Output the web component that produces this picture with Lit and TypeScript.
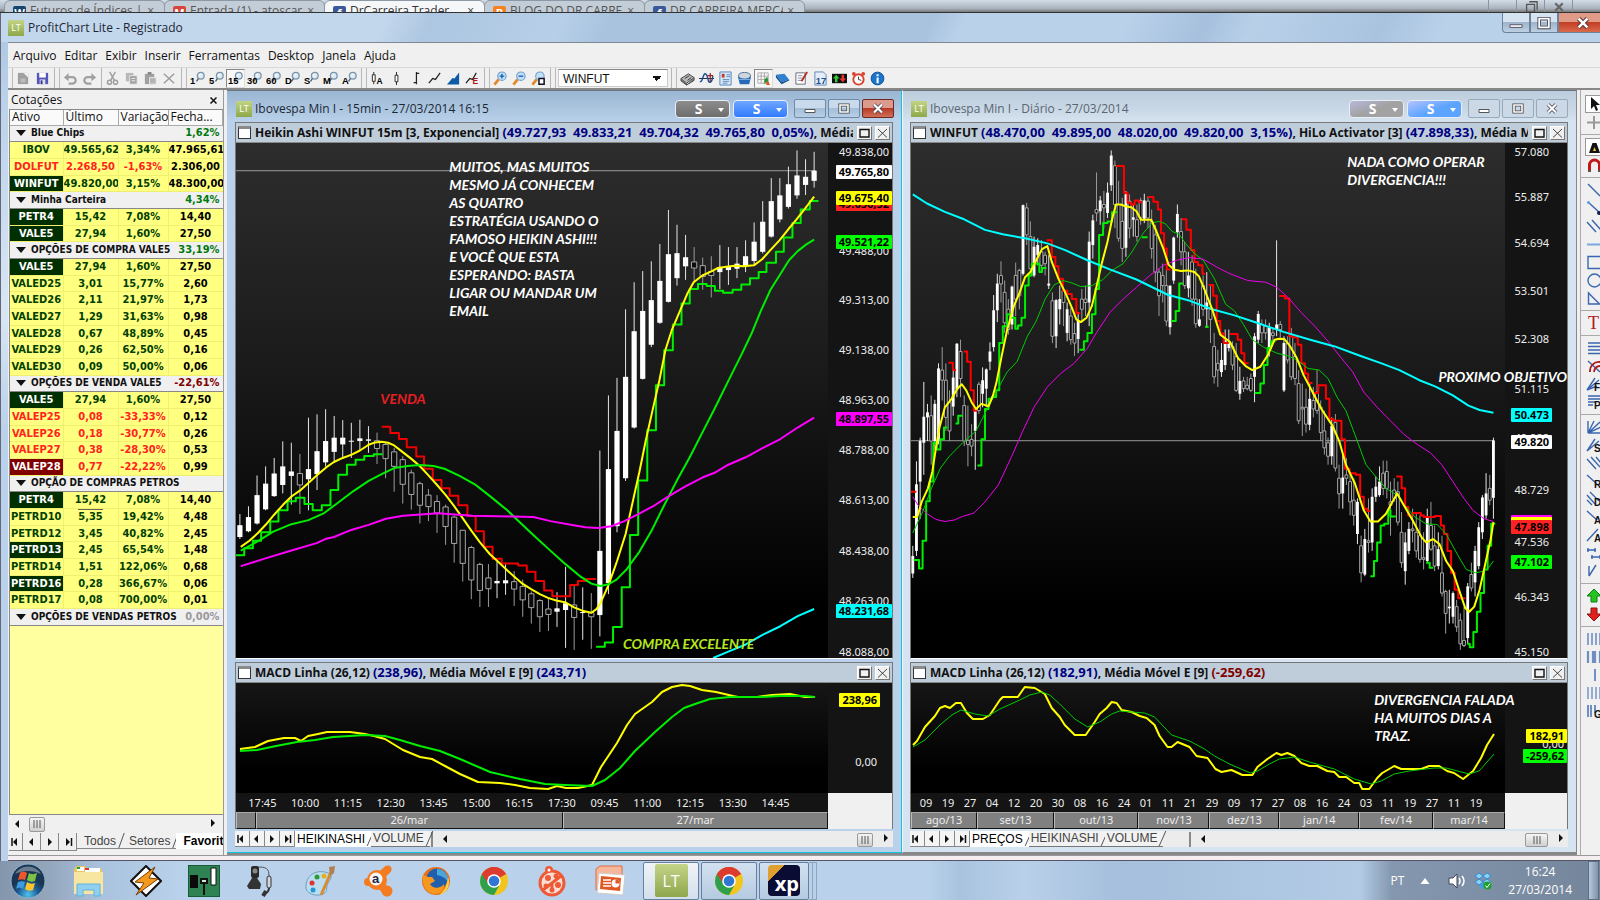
import { LitElement, html, svg, css, nothing } from "lit";
import { customElement, property } from "lit/decorators.js";
import { classMap } from "lit/directives/class-map.js";

type Pt = [number, number];
type Candle = [number, number, number, number, number];

/* ---------- quotes ---------- */
interface Quote { s: string; u: string; v: string; f: string; down?: boolean; mark?: boolean; over?: boolean; rule?: boolean }
interface Group { name: string; pct: string; tone: string; rows: Quote[] }
const q = (line: string): Quote => {
  const [s, u, v, f, flags = ""] = line.split(" ");
  return { s, u, v, f, down: flags.includes("d"), mark: flags.includes("m"), over: flags.includes("o"), rule: flags.includes("r") };
};
const GROUPS: Group[] = [
  { name: "Blue Chips", pct: "1,62%", tone: "up", rows: ["IBOV 49.565,62 3,34% 47.965,61", "DOLFUT 2.268,50 -1,63% 2.306,00 d", "WINFUT 49.820,00 3,15% 48.300,00 m"].map(q) },
  { name: "Minha Carteira", pct: "4,34%", tone: "up", rows: ["PETR4 15,42 7,08% 14,40 m", "VALE5 27,94 1,60% 27,50 m"].map(q) },
  { name: "OPÇÕES DE COMPRA VALE5", pct: "33,19%", tone: "up", rows: ["VALE5 27,94 1,60% 27,50 m", "VALED25 3,01 15,77% 2,60", "VALED26 2,11 21,97% 1,73", "VALED27 1,29 31,63% 0,98", "VALED28 0,67 48,89% 0,45", "VALED29 0,26 62,50% 0,16", "VALED30 0,09 50,00% 0,06"].map(q) },
  { name: "OPÇÕES DE VENDA VALE5", pct: "-22,61%", tone: "down", rows: ["VALE5 27,94 1,60% 27,50 m", "VALEP25 0,08 -33,33% 0,12 d", "VALEP26 0,18 -30,77% 0,26 d", "VALEP27 0,38 -28,30% 0,53 d", "VALEP28 0,77 -22,22% 0,99 dm"].map(q) },
  { name: "OPÇÃO DE COMPRAS PETROS", pct: "", tone: "up", rows: ["PETR4 15,42 7,08% 14,40 m", "PETRD10 5,35 19,42% 4,48 o", "PETRD12 3,45 40,82% 2,45", "PETRD13 2,45 65,54% 1,48 m", "PETRD14 1,51 122,06% 0,68", "PETRD16 0,28 366,67% 0,06 m", "PETRD17 0,08 700,00% 0,01 r"].map(q) },
  { name: "OPÇÕES DE VENDAS PETROS", pct: "0,00%", tone: "flat", rows: [] },
];

/* ---------- series ---------- */
const pts = (s: string): Pt[] => s.trim().split(/\s+/).map((p) => p.split(",").map(Number) as Pt);
const candles = (s: string): Candle[] => s.trim().split(/\s+/).map((p) => p.split(",").map(Number) as Candle);
const poly = (s: string) => pts(s).map((p) => p.join(",")).join(" ");
/** "x0 x1,y1 x2,y2": horizontal runs joined by vertical jumps */
const stair = (s: string) => {
  const [start, ...rest] = s.trim().split(/\s+/);
  let x = Number(start);
  const out: string[] = [];
  for (const r of rest) {
    const [nx, y] = r.split(",").map(Number);
    out.push(`${x},${y}`, `${nx},${y}`);
    x = nx;
  }
  return out.join(" ");
};

interface Line { kind?: "stair"; color: string; w: number; d: string }
interface Tag { y: number; text: string; bg: string }
interface Plot { box: [number, number, number, number]; first?: number; step?: number; body?: number; candles?: Candle[]; lines: Line[]; level?: [number, number]; labels: [number, string][]; tags: Tag[] }

const P15: Plot = {
  box: [14, 8, 1366, 1524], first: 23, step: 19.776, body: 12,
  candles: candles(`1106,1139,1174,1180,1 1083,1115,1157,1160,1 992,1050,1134,1137,1 965,1016,1092,1095,1 940,986,1053,1055,1 891,965,1020,1045,1 895,980,993,1078,1 928,986,1020,1106,0 821,973,1003,1095,1 811,920,988,1035,1 796,890,953,965,1 816,880,922,950,1 828,880,900,940,1 836,889,892,940,1 827,882,890,918,1 846,885,889,925,1 865,889,912,958,0 895,900,942,1000,0 910,922,965,1040,0 935,945,1018,1075,0 975,984,1048,1093,0 1010,1016,1080,1134,0 1032,1050,1084,1127,0 1050,1069,1103,1162,0 1078,1085,1143,1197,0 1110,1115,1193,1250,0 1154,1154,1252,1306,0 1200,1205,1301,1358,0 1250,1255,1332,1381,0 1254,1295,1327,1381,0 1246,1304,1311,1355,1 1250,1302,1311,1345,1 1275,1306,1328,1378,0 1300,1320,1360,1410,0 1335,1342,1383,1430,0 1358,1362,1410,1455,0 1355,1387,1403,1452,0 1337,1385,1395,1440,1 1262,1370,1390,1502,1 1318,1375,1412,1508,0 1323,1396,1399,1478,1 1340,1398,1410,1505,0 918,1215,1405,1468,1 755,973,1310,1343,1 703,860,1142,1160,1 500,700,1000,1008,1 420,565,850,853,1 387,505,706,708,1 358,473,605,612,1 307,416,540,543,1 206,337,478,480,1 250,334,408,430,1 280,346,373,413,1 316,360,378,418,0 347,371,403,442,0 343,388,400,465,0 310,375,390,440,1 316,373,384,428,1 316,365,380,408,1 296,343,372,390,1 243,300,357,370,1 180,241,330,335,1 112,180,285,288,1 112,163,234,243,1 78,130,197,202,1 30,104,163,173,1 56,108,132,162,1 34,90,120,140,1`),
  level: [90, 1352],
  lines: [
    { kind: "stair", color: "#0e0", w: 2, d: "14 33,1228 53,1207 72,1185 93,1160 112,1128 133,1095 152,1068 172,1058 191,1076 212,1095 232,1080 250,1035 270,990 290,960 310,945 332,934 352,929" },
    { kind: "stair", color: "#e00", w: 2, d: "350 370,848 390,866 408,884 430,908 448,936 468,972 488,1005 507,1030 527,1052 548,1080 567,1112 586,1157 606,1203 627,1238 665,1252 685,1258 705,1277 725,1304 744,1332 785,1349 803,1316 822,1304 845,1298" },
    { kind: "stair", color: "#0e0", w: 2, d: "845 865,1499 884,1486 904,1440 923,1323 942,1168 963,1007 983,858 1002,725 1022,621 1042,545 1061,483 1080,440 1100,425 1119,431 1138,445 1160,451 1180,442 1200,427 1220,408 1238,390 1260,362 1278,330 1298,288 1317,245 1338,205 1358,180" },
    { color: "#ff0", w: 2, d: "25,1203 45,1185 64,1163 83,1137 102,1108 123,1078 142,1054 162,1036 181,1014 202,990 222,968 240,952 260,940 281,930 300,918 320,901 335,894 350,892 365,895 379,903 398,922 418,942 438,964 457,990 478,1020 498,1050 517,1082 537,1118 557,1155 577,1190 600,1225 617,1245 636,1268 655,1290 675,1312 695,1328 715,1343 734,1354 753,1362 775,1368 794,1382 813,1392 834,1398 845,1388 853,1375 873,1318 892,1250 913,1165 932,1055 945,980 960,885 975,800 991,710 1005,620 1020,560 1035,515 1055,455 1070,420 1090,400 1111,388 1125,378 1145,374 1165,371 1185,373 1209,370 1228,352 1247,325 1268,296 1288,264 1307,235 1327,202 1348,167" },
    { color: "#0e0", w: 2, d: "25,1214 60,1190 100,1158 142,1136 181,1124 215,1105 250,1072 285,1038 320,1008 350,988 379,970 410,964 438,961 470,964 495,972 530,993 565,1018 600,1053 640,1095 670,1132 700,1168 740,1215 775,1255 810,1292 834,1312 855,1319 873,1314 892,1300 915,1270 945,1217 975,1150 1000,1085 1030,1010 1060,940 1090,865 1120,790 1150,712 1180,635 1205,568 1225,505 1247,443 1268,400 1290,355 1310,328 1330,308 1348,294" },
    { color: "#f0f", w: 2, d: "25,1260 80,1238 142,1214 200,1192 220,1180 240,1174 280,1153 320,1138 360,1120 400,1111 440,1107 480,1104 520,1107 560,1111 650,1113 700,1115 740,1127 780,1136 820,1145 850,1147 880,1142 910,1127 940,1108 980,1080 1010,1055 1050,1025 1090,998 1120,983 1150,960 1190,938 1230,910 1270,884 1310,850 1348,821" },
    { color: "#0ff", w: 2, d: "1115,1532 1150,1513 1190,1492 1230,1463 1270,1438 1310,1408 1348,1387" },
  ],
  labels: [[36, "49.838,00"], [328, "49.488,00"], [474, "49.313,00"], [620, "49.138,00"], [768, "48.963,00"], [916, "48.788,00"], [1065, "48.613,00"], [1214, "48.438,00"], [1364, "48.263,00"], [1515, "48.088,00"]],
  tags: [{ y: 95, text: "49.765,80", bg: "#fff" }, { y: 188, text: "49.656,52", bg: "#f22" }, { y: 172, text: "49.675,40", bg: "#ff0" }, { y: 300, text: "49.521,22", bg: "#0f0" }, { y: 825, text: "48.897,55", bg: "#f0f" }, { y: 1392, text: "48.231,68", bg: "#0ff" }],
};

const PDAY: Plot = {
  box: [24, 8, 1333, 1524], first: 28, step: 8.247, body: 6.4,
  candles: candles(`1200,1230,1282,1295,1 950,1018,1215,1230,1 880,890,1010,1120,1 715,818,895,990,1 780,805,820,890,1 755,815,890,960,0 768,780,890,915,1 660,675,890,900,1 612,680,710,770,0 660,710,820,860,0 740,775,860,890,0 680,702,788,815,1 600,602,738,760,1 590,625,705,760,0 755,785,890,905,0 785,888,900,965,0 840,885,905,935,0 790,800,860,975,1 715,722,800,810,0 672,710,750,790,1 675,678,735,790,1 598,625,655,680,1 458,503,612,625,1 395,424,503,538,1 358,400,425,480,0 415,450,540,570,0 470,500,560,575,0 430,433,545,560,1 362,400,470,520,0 380,385,460,500,0 190,192,395,400,1 185,200,280,310,0 240,285,380,395,0 285,315,400,405,1 290,310,340,370,1 295,330,370,390,0 330,340,365,400,0 340,424,430,440,1 450,475,580,600,0 470,473,580,615,1 430,470,500,545,1 440,445,480,550,0 480,500,570,595,1 495,520,590,605,0 540,572,600,638,0 508,532,588,630,1 440,470,500,535,0 430,470,480,520,0 270,300,480,550,1 220,237,310,350,1 95,205,215,240,0 165,178,210,250,1 150,190,200,260,0 125,155,215,230,1 30,45,133,150,1 60,75,190,260,0 120,190,290,300,0 170,240,320,360,0 150,160,318,345,1 160,180,260,290,0 190,228,235,285,1 190,235,285,300,0 170,178,230,250,0 158,178,232,245,1 165,180,230,260,0 205,240,320,350,0 250,280,390,420,0 380,390,460,520,0 365,400,430,480,0 380,430,535,550,0 430,430,553,575,1 285,288,415,425,1 190,218,272,288,1 230,270,330,370,0 300,330,430,440,0 330,400,438,465,1 340,360,470,490,0 380,470,543,555,0 470,530,549,552,1 400,430,500,520,0 390,480,500,555,1 430,500,530,600,0 570,610,700,720,0 620,660,680,730,0 600,650,686,700,1 560,592,665,680,1 560,600,615,625,1 595,610,665,680,0 600,640,740,745,0 670,712,750,768,1 700,712,735,745,0 700,725,735,740,0 690,705,740,745,0 570,580,700,775,1 505,514,590,600,1 530,545,570,600,0 530,550,570,590,0 540,555,620,640,1 555,570,578,600,0 296,545,560,580,1 535,545,560,590,0 580,600,740,745,1 580,600,650,660,0 555,575,700,710,0 600,640,705,725,0 680,720,830,840,0 720,790,795,875,0 735,790,840,865,0 720,765,842,858,1 730,770,795,820,0 680,745,800,810,0 770,790,865,890,0 800,860,910,930,0 880,895,935,960,0 820,845,935,960,1 810,835,970,980,0 960,1000,1046,1090,0 930,998,1045,1090,1 940,990,1000,1020,0 985,1010,1070,1110,0 1000,1065,1110,1140,0 1060,1070,1165,1195,1 1170,1200,1280,1308,0 1150,1180,1285,1290,1 1060,1185,1190,1220,0 1030,1055,1190,1215,1 995,1025,1055,1070,1 965,1010,1050,1055,1 948,985,1030,1050,0 948,980,1030,1060,0 1010,1070,1080,1170,0 1000,1035,1060,1070,0 1010,1040,1130,1140,0 1100,1160,1250,1265,0 1160,1190,1275,1315,1 1130,1150,1215,1225,1 1090,1150,1155,1190,0 1100,1160,1215,1235,0 1110,1170,1240,1250,0 1160,1235,1240,1270,0 1090,1115,1245,1250,1 1070,1140,1210,1215,0 1140,1200,1260,1275,0 1160,1210,1260,1270,1 1170,1280,1340,1350,0 1330,1335,1400,1460,0 1330,1380,1385,1430,1 1335,1340,1410,1430,1 1360,1380,1440,1455,0 1400,1420,1490,1508,0 1380,1480,1495,1500,0 1310,1320,1473,1490,1 1250,1285,1325,1335,0 1200,1215,1308,1350,1 1130,1145,1260,1270,1 1050,1057,1160,1180,1 985,1045,1110,1120,1 990,1030,1065,1080,0 880,888,1058,1120,1`),
  level: [889, 1331],
  lines: [
    ...["24 36,1040", "108 118,658 125,680", "142 150,625 158,655 165,740 172,800", "328 340,296 348,345 355,373 365,410 375,445 385,455 395,470 404,512", "484 502,76 510,155 518,185 526,190 535,178 543,183", "555 568,168 578,182 585,205 592,275 598,320 607,382", "632 642,234 652,265 660,325 668,360 678,370 684,395", "692 702,428 710,460 718,535 726,572 737,600", "740 757,573 765,590 772,630 782,660", "850 863,461 873,468 880,580 892,583 900,605 908,660 915,690 925,718", "928 938,748 955,725 963,765 972,825 990,830 998,885 1008,972 1022,985 1032,990 1040,1055 1048,1090 1055,1097", "1113 1125,995 1133,1030 1140,1085 1150,1110 1168,1103 1175,1110 1200,1115 1213,1112 1220,1140 1228,1165 1236,1215 1244,1280 1252,1330 1268,1355"].map((d): Line => ({ kind: "stair", color: "#f00", w: 2, d })),
    ...["30 42,1242 50,1267 58,1185 66,1068 74,1010 82,895 90,915 98,885 106,850", "124 130,838 140,815", "173 182,962 190,885 198,795 206,765 215,760 222,740 230,600 240,550 248,515 258,525 264,558 272,548 280,525 288,430 295,400 305,365 312,365 318,390 328,378", "402 412,620 420,595 430,570 438,515 446,440 455,280 465,245 475,240 487,213", "542 555,287", "608 618,535 626,505 635,424", "684 692,552", "795 808,748 816,720 824,665 832,615 842,595", "1055 1063,1290 1070,1245 1078,1190 1086,1140 1095,1135 1100,1095 1112,1113", "1180 1188,1250 1196,1265", "1272 1278,1490 1286,1500 1294,1455 1302,1395 1310,1340 1318,1270 1326,1200 1335,1135"].map((d): Line => ({ kind: "stair", color: "#0e0", w: 2, d })),
    { color: "#0c0", w: 1, d: "28,1162 50,1100 70,1030 90,970 110,935 140,895 170,860 195,795 215,745 240,685 262,655 285,580 305,535 325,470 345,428 365,415 385,422 405,433 430,430 455,412 475,385 500,365 520,330 545,275 565,245 580,240 595,247 610,270 625,277 640,305 660,335 680,355 705,410 730,485 750,505 770,545 790,590 815,612 845,630 870,638 890,650 915,675 940,680 960,705 980,760 1000,800 1020,870 1045,960 1070,1000 1090,1030 1115,1050 1130,1078 1155,1115 1180,1135 1205,1137 1225,1165 1250,1225 1270,1270 1290,1280 1310,1275 1320,1265 1331,1245" },
    { color: "#e0e", w: 1, d: "28,1055 40,1080 60,1105 80,1122 100,1128 120,1124 140,1113 165,1103 190,1070 220,1020 250,935 275,860 300,790 330,730 360,690 390,660 420,615 440,570 470,510 500,470 530,435 560,400 590,370 620,355 650,347 680,352 710,375 740,395 780,415 820,420 845,435 870,465 900,510 930,550 960,595 990,645 1015,685 1040,745 1070,790 1100,830 1130,870 1160,900 1190,925 1215,960 1240,1010 1265,1060 1285,1095 1310,1120 1331,1128" },
    { color: "#0ff", w: 2, d: "28,160 60,187 100,212 140,232 190,265 230,278 280,290 330,305 370,325 420,355 470,382 530,412 600,457 650,475 700,500 750,518 800,540 860,567 920,590 975,610 1030,637 1080,660 1120,680 1165,710 1200,728 1240,755 1275,785 1300,798 1331,806" },
    { color: "#ff0", w: 2, d: "28,1115 38,1115 48,1070 62,1030 72,980 80,910 88,850 100,790 115,765 128,735 138,722 148,740 160,775 170,795 182,780 198,787 208,755 216,715 228,635 240,560 255,490 268,450 280,405 292,390 305,355 318,322 330,313 340,360 355,410 370,450 385,495 395,530 405,538 418,525 430,490 440,435 452,365 465,300 475,235 484,190 495,190 505,195 518,198 530,210 540,235 563,235 575,270 590,320 602,368 615,383 630,387 645,385 660,390 670,402 682,440 700,500 718,575 740,597 758,645 775,668 790,680 808,670 825,635 840,590 850,587 862,588 875,610 890,645 905,695 925,745 945,795 970,845 985,890 1000,960 1020,1015 1040,1095 1055,1128 1072,1128 1090,1105 1100,1080 1115,1045 1130,1080 1150,1125 1170,1175 1180,1190 1195,1180 1210,1195 1225,1245 1240,1275 1255,1335 1268,1385 1277,1395 1288,1380 1300,1330 1315,1240 1325,1180 1331,1130" },
  ],
  labels: [[36, "57.080"], [168, "55.887"], [305, "54.694"], [445, "53.501"], [587, "52.308"], [735, "51.115"], [880, "49.922"], [1035, "48.729"], [1189, "47.536"], [1350, "46.343"], [1515, "45.150"]],
  tags: [{ y: 812, text: "50.473", bg: "#0ff" }, { y: 893, text: "49.820", bg: "#fff" }, { y: 1130, text: "47.990", bg: "#f0f" }, { y: 1136, text: "47.970", bg: "#ff0" }, { y: 1143, text: "47.898", bg: "#f22" }, { y: 1249, text: "47.102", bg: "#0f0" }],
};

const M15: Plot = {
  box: [236, 682, 592, 110],
  lines: [
    { color: "#ff0", w: 2, d: "240,748 255,746 268,740 284,737 295,737 301,740 308,735 318,733 327,731 350,731 365,733 374,735 385,738 403,749 420,756 432,758 445,765 460,773 478,781 500,782 515,784 530,787 548,788 557,785 566,787 578,787 592,784 601,766 617,742 627,724 635,713 652,701 662,691 672,686 682,684 690,685 702,689 716,691 733,695 738,696 757,696 772,694 790,693 805,696 815,696" },
    { color: "#0e0", w: 2, d: "240,750 257,749 276,745 297,741 315,739 333,736 350,735 365,734 385,735 400,739 420,745 440,750 460,758 490,771 520,778 545,783 565,784 592,785 605,779 620,767 635,750 655,731 672,716 684,707 695,703 710,698 730,696 760,696 780,695 805,695 815,696" },
  ],
  labels: [[761, "0,00"]],
  tags: [{ y: 699, text: "238,96", bg: "#ff0" }],
};
const MDAY: Plot = {
  box: [911, 682, 595, 110],
  lines: [
    { color: "#ff0", w: 2, d: "913,744 917,740 925,726 935,715 940,707 945,705 950,707 956,702 961,702 967,712 973,718 983,718 990,714 1000,699 1003,696 1018,696 1025,686 1035,687 1045,693 1052,707 1060,716 1065,724 1075,734 1086,734 1095,721 1100,713 1107,707 1112,701 1117,702 1122,709 1132,711 1140,715 1147,717 1155,724 1160,735 1168,746 1172,746 1178,741 1190,746 1197,755 1208,757 1216,768 1222,771 1232,769 1243,774 1253,774 1258,766 1268,758 1277,752 1282,754 1288,752 1295,755 1302,762 1310,765 1318,765 1328,770 1335,771 1340,776 1347,776 1355,782 1360,782 1363,788 1370,788 1378,777 1383,772 1390,768 1395,765 1402,768 1422,768 1430,765 1440,765 1448,770 1455,772 1464,778 1474,770 1482,757 1488,744 1495,733" },
    { color: "#0c0", w: 1, d: "913,746 925,739 940,724 952,714 961,709 975,713 988,715 1000,708 1020,699 1030,694 1042,691 1050,694 1060,703 1075,718 1088,726 1100,721 1112,713 1120,710 1145,712 1155,716 1172,734 1190,740 1205,748 1215,755 1230,763 1251,772 1258,770 1270,763 1280,758 1295,756 1310,761 1335,768 1355,778 1372,783 1382,780 1395,773 1410,770 1435,767 1447,767 1470,773 1480,770 1488,761 1495,753" },
  ],
  labels: [[743, "0,00"]],
  tags: [{ y: 735, text: "182,91", bg: "#ff0" }, { y: 755, text: "-259,62", bg: "#0f0" }],
};

interface Note { x: number; y: number; text: string; color: string }
interface Chart {
  id: string; title: string; active: boolean; price: Plot; macd: Plot;
  head: [string, string][]; macdHead: [string, string][];
  notes: Note[]; macdNotes: Note[]; times: string[]; months: [number, string][]; tabs: string[];
}
const CHARTS: Chart[] = [
  {
    id: "m15", title: "Ibovespa Min I - 15min - 27/03/2014 16:15", active: true, price: P15, macd: M15,
    head: [["", "Heikin Ashi WINFUT 15m [3, Exponencial] "], ["navy", "(49.727,93  49.833,21  49.704,32  49.765,80  0,05%)"], ["", ", Média Móvel"]],
    macdHead: [["", "MACD Linha (26,12) "], ["navy", "(238,96)"], ["", ", Média Móvel E [9] "], ["navy", "(243,71)"]],
    notes: [
      { x: 32.5, y: 3, text: "MUITOS, MAS MUITOS\nMESMO JÁ CONHECEM\nAS QUATRO\nESTRATÉGIA USANDO O\nFAMOSO HEIKIN ASHI!!!\nE VOCÊ QUE ESTA\nESPERANDO: BASTA\nLIGAR OU MANDAR UM\nEMAIL", color: "#fff" },
      { x: 22, y: 48, text: "VENDA", color: "#e62020" },
      { x: 59, y: 95.6, text: "COMPRA EXCELENTE", color: "#b4e61e" },
    ],
    macdNotes: [],
    times: "17:45 10:00 11:15 12:30 13:45 15:00 16:15 17:30 09:45 11:00 12:15 13:30 14:45".split(" "),
    months: [[18, ""], [308, "26/mar"], [266, "27/mar"]],
    tabs: ["HEIKINASHI", "VOLUME"],
  },
  {
    id: "day", title: "Ibovespa Min I - Diário - 27/03/2014", active: false, price: PDAY, macd: MDAY,
    head: [["", "WINFUT "], ["navy", "(48.470,00  49.895,00  48.020,00  49.820,00  3,15%)"], ["", ", HiLo Activator [3] "], ["navy", "(47.898,33)"], ["", ", Média Móvel"]],
    macdHead: [["", "MACD Linha (26,12) "], ["navy", "(182,91)"], ["", ", Média Móvel E [9] "], ["wine", "(-259,62)"]],
    notes: [
      { x: 66.5, y: 2, text: "NADA COMO OPERAR\nDIVERGENCIA!!!", color: "#fff" },
      { x: 80.4, y: 43.7, text: "PROXIMO OBJETIVO", color: "#fff" },
    ],
    macdNotes: [{ x: 70.6, y: 7, text: "DIVERGENCIA FALADA\nHA MUITOS DIAS A\nTRAZ.", color: "#fff" }],
    times: "09 19 27 04 12 20 30 08 16 24 01 11 21 29 09 17 27 08 16 24 03 11 19 27 11 19".split(" "),
    months: [[66, "ago/13"], [77, "set/13"], [85, "out/13"], [71, "nov/13"], [70, "dez/13"], [80, "jan/14"], [74, "fev/14"], [72, "mar/14"]],
    tabs: ["PREÇOS", "HEIKINASHI", "VOLUME"],
  },
];

/* ---------- icons ---------- */
const icon = (body: unknown, size = 16, view = 16) => html`<svg width=${size} height=${size} viewBox="0 0 ${view} ${view}" aria-hidden="true">${body}</svg>`;
const lens = (x: number, y: number, r: number) => svg`<circle cx=${x} cy=${y} r=${r} fill="#dcebf5" stroke="#7a95a8" stroke-width="1.4"/><path d="M${x - 1.5} ${y + 0.5}a2 2 0 0 1 2-2" stroke="#fff" fill="none"/>`;
const period = (t: string) => icon(svg`${lens(11.5, 5, 3.6)}<path d="M9 8L7 11" stroke="#555" stroke-width="1.4"/><text x="0" y="14" font-size="10" font-weight="700" font-family="Liberation Sans" fill="#000">${t}</text>`);
const zoomer = (extra: unknown) => icon(svg`<path d="M6 9L1.5 14.5" stroke="#e08a2c" stroke-width="3"/><circle cx="9.5" cy="5.5" r="4.5" fill="#c4e0f6" stroke="#6fa3cf" stroke-width="1.2"/>${extra}`);
const GRAY = "#a0a0a0";
const TB: Record<string, unknown> = {
  Novo: icon(svg`<path d="M2 2h11v12H2z" fill="${GRAY}"/><path d="M8 2h5v5z" fill="#efefef"/><path d="M5 8h5v4H5z" fill="#bdbdbd"/>`),
  Salvar: icon(svg`<path d="M2 2h12v12H2z" fill="#5656b8"/><path d="M4.500 2h7v5h-7z" fill="#fff"/><path d="M5 9h6v5H5z" fill="#dde"/><path d="M6 10h2v4H6z" fill="#33338c"/>`),
  Desfazer: icon(svg`<path d="M4 6.500h6a3.500 3.500 0 0 1 0 7H6" fill="none" stroke="${GRAY}" stroke-width="2.4"/><path d="M1 7l5-5v9z" fill="${GRAY}"/>`),
  Refazer: icon(svg`<path d="M12 6.500H6a3.500 3.500 0 0 0 0 7h4" fill="none" stroke="${GRAY}" stroke-width="2.4"/><path d="M15 7l-5-5v9z" fill="${GRAY}"/>`),
  Recortar: icon(svg`<path d="M5 1l5 9M11 1L6 10" stroke="${GRAY}" stroke-width="1.600" fill="none"/><circle cx="4.800" cy="12" r="2.200" fill="none" stroke="${GRAY}" stroke-width="1.600"/><circle cx="11.200" cy="12" r="2.200" fill="none" stroke="${GRAY}" stroke-width="1.600"/>`),
  Copiar: icon(svg`<path d="M2 2h8v9H2z" fill="#b8b8b8"/><path d="M6 5h8v9H6z" fill="${GRAY}" stroke="#e8e8e8"/><path d="M8 8h4M8 10.500h4" stroke="#eee"/>`),
  Colar: icon(svg`<path d="M2 3h10v11H2z" fill="${GRAY}"/><path d="M5 1h4v3H5z" fill="#888"/><path d="M7 7h7v7H7z" fill="#b4b4b4" stroke="#e8e8e8"/>`),
  Excluir: icon(svg`<path d="M2 3l11 10M13 3L2 13" stroke="#9a9a9a" stroke-width="1.400"/>`),
  "1": period("1"), "5": period("5"), "15": period("15"), "30": period("30"), "60": period("60"), D: period("D"), S: period("S"), M: period("M"), A: period("A"),
  "Candle automático": icon(svg`<path d="M4 1v13" stroke="#222"/><path d="M2.500 4h3v7h-3z" fill="#fff" stroke="#222"/><text x="7" y="14" font-size="9" font-weight="700" font-family="Liberation Sans">A</text>`),
  Candle: icon(svg`<path d="M8 1v14" stroke="#222"/><path d="M6.500 4.500h3v7h-3z" fill="#fff" stroke="#222"/>`),
  Barras: icon(svg`<path d="M9 1v13M9 2.500h3M6 12.500h3" stroke="#222" stroke-width="1.300"/>`),
  Linha: icon(svg`<path d="M2 13l4-5 3 1 5-7" fill="none" stroke="#222" stroke-width="1.300"/>`),
  Área: icon(svg`<path d="M1 14.500L14 14.500V1.500L9 8 7 7.500z" fill="#0d5aa7"/>`),
  "Linha E": icon(svg`<path d="M1 13l4-5 3 1 4-7" fill="none" stroke="#222" stroke-width="1.300"/><text x="8" y="14" font-size="9" font-weight="700" font-family="Liberation Sans" fill="#b01010">E</text>`),
  Ampliar: zoomer(svg`<path d="M7 5.500h5M9.500 3v5" stroke="#1659b0" stroke-width="1.400"/>`),
  Reduzir: zoomer(svg`<path d="M7 5.500h5" stroke="#1659b0" stroke-width="1.400"/>`),
  "Zoom janela": zoomer(svg`<path d="M8.500 8h5.500v6H8.500z" fill="#fff" stroke="#112" stroke-width="1.600"/>`),
  Negócios: icon(svg`<path d="M1 8l8-5 6 4-8 6z" fill="#b9b9b9" stroke="#444"/><path d="M1 8v2.500l6 4.500V13M7 15l8-5V7" fill="#777" stroke="#444"/><path d="M5 8l5-3M8 10l4-3" stroke="#333"/>`),
  Indicadores: icon(svg`<path d="M0 8h16" stroke="#222"/><path d="M1 11c3 2 3-9 6-8s2 10 5 9 2-6 3-7" fill="none" stroke="#12539c" stroke-width="1.500"/><path d="M9 5h6M12 2v10" stroke="#a02020" stroke-width="1.300"/>`),
  Relatório: icon(svg`<path d="M2 1h12v14H2z" fill="#d7e8f8" stroke="#4f86bd"/><path d="M4 3h3v4H4z" fill="#c33a2c"/><path d="M9 4h4M9 6h4M5 9h7M5 11h7M5 13h5" stroke="#5d86b5"/>`),
  Carteira: icon(svg`<path d="M1 6h14l-2 8H3z" fill="#2569b8"/><ellipse cx="8" cy="5" rx="6.500" ry="3.500" fill="#cfd6dd" stroke="#4b6f96"/><path d="M2 9h12" stroke="#7db5ee"/>`),
  Grade: icon(svg`<path d="M2 2h11v11H2zM2 5.500h11M2 9h11M5.500 2v11M9 2v11" fill="none" stroke="#aaa"/><path d="M11 7l4 8h-4z" fill="#e2571b"/><path d="M9 9l3-3 1 4-4 4z" fill="#25913a"/>`),
  Livro: icon(svg`<path d="M1 4l9-1 5 6-8 3z" fill="#2f80d0"/><path d="M1 4v3l6 7 8-4V9l-8 3z" fill="#144f93"/>`),
  Notas: icon(svg`<path d="M2 2h10v12H2z" fill="#fff" stroke="#667"/><path d="M4 5h5M4 7.500h5M4 10h4" stroke="#88a"/><path d="M14 1L8 11" stroke="#b03020" stroke-width="2"/>`),
  Calendário: icon(svg`<path d="M2 1h9l3 3v11H2z" fill="#e5eef8" stroke="#5d86b5"/><text x="3" y="14" font-size="10" font-weight="700" font-family="Liberation Sans" fill="#1d4f91">17</text>`),
  Ordens: icon(svg`<path d="M0 3h16v10H0z" fill="#111"/><path d="M4.500 4L8 8H5.800v4H3.200V8H1z" fill="#3c3"/><path d="M11.500 12L15 8h-2.200V4h-2.600v4H8z" fill="#e33"/>`),
  Alarme: icon(svg`<circle cx="8" cy="9" r="5.500" fill="#fff" stroke="#d8412d" stroke-width="2"/><path d="M8 6v3l3 1" stroke="#333" fill="none"/><circle cx="3" cy="3" r="2" fill="#d8412d"/><circle cx="13" cy="3" r="2" fill="#d8412d"/>`),
  Informação: icon(svg`<circle cx="8" cy="8" r="6.800" fill="#1a74cc" stroke="#0e4f92"/><path d="M7 7h2.200v6H7zM7 3.500h2.200v2.200H7z" fill="#fff"/>`),
};
const TOOL_GROUPS: string[][] = [["Novo", "Salvar"], ["Desfazer", "Refazer"], ["Recortar", "Copiar", "Colar", "Excluir"], ["1", "5", "15", "30", "60", "D", "S", "M", "A"], ["Candle automático", "Candle", "Barras", "Linha", "Área", "Linha E"], ["Ampliar", "Reduzir", "Zoom janela"]];
const TOOL_LAST = ["Negócios", "Indicadores", "Relatório", "Carteira", "Grade", "Livro", "Notas", "Calendário", "Ordens", "Alarme", "Informação"];

const B = "#3a66b0";
const ln = (d: string, c = B, w = 1.4) => svg`<path d=${d} stroke=${c} stroke-width=${w} fill="none"/>`;
const lt = (t: string) => svg`<text x="8" y="15" font-size="10" font-weight="700" font-family="Liberation Sans" fill="#111">${t}</text>`;
const DRAW: (null | [string, unknown])[] = [
  ["Selecionar", icon(svg`<path d="M5 1v12l3-3 2 5 2-1-2-5h4z" fill="#111"/>`)],
  ["Cruz", icon(ln("M8 2v13M1 8.500h14", "#999", 2))],
  null,
  ["Texto automático", icon(svg`<path d="M3 14L6.500 4h4L14 14z" fill="#111"/><path d="M7 12l1.500-4 1.500 4z" fill="#f0d020"/>`)],
  ["Ímã", icon(svg`<path d="M3.500 14V8a5 5 0 0 1 10 0v6" fill="none" stroke="#c01818" stroke-width="3"/><path d="M2 13h3v2H2zM12 13h3v2h-3z" fill="#555"/>`)],
  null,
  ["Reta", icon(ln("M2 2l12 12"))],
  ["Segmento", icon(svg`${ln("M2 2l12 11")}<circle cx="2.500" cy="2.500" r="1.500" fill="#5aa0e0"/><circle cx="13" cy="13" r="2" fill="#124"/>`)],
  ["Canal", icon(ln("M1 4l9 10M6 2l9 10"))],
  ["Horizontal", icon(ln("M1 8.500h14", "#7aa8dc", 2))],
  ["Retângulo", icon(svg`<path d="M2 2.500h13v12H2z" fill="none" stroke="${B}" stroke-width="1.400"/>`)],
  ["Elipse", icon(svg`<circle cx="8.500" cy="8.500" r="6.500" fill="none" stroke="${B}" stroke-width="1.400"/>`)],
  ["Triângulo", icon(ln("M2.500 3v11h11z"))],
  null,
  ["Texto", icon(svg`<text x="2" y="14" font-size="18" font-family="Liberation Serif" fill="#b01818">T</text>`)],
  null,
  ["Fibonacci", icon(ln("M2 3h13M2 6.500h13M2 10h13M2 13.500h13"))],
  ["Arcos", icon(svg`${ln("M2 3l12 11")}${ln("M4 14a9 9 0 0 1 10-10M8 14a6 6 0 0 1 6-6", "#b01818", 1.8)}`)],
  ["Leque F", icon(svg`${ln("M1 14L9 2M1 14L13 4M1 14l10-4")}${lt("F")}`)],
  ["Projeção", icon(svg`${ln("M2 2h13M2 5h13M2 8h8M2 11h5")}${lt("P")}`)],
  null,
  ["Gann", icon(ln("M2 14V2M2 14L8 2M2 14L14 3M2 14l13-6M2 14h13"))],
  ["Leque S", icon(svg`${ln("M1 14L9 2M1 14L13 4")}${lt("S")}`)],
  ["Paralelas", icon(ln("M1 4l9 10M5 2l9 10M10 2l5 6"))],
  ["Regressão", icon(svg`${ln("M1 2l10 9")}${lt("R")}`)],
  ["Desvio", icon(svg`${ln("M1 4l8 9M4 1l9 9M1 9l5 5")}${lt("D")}`)],
  ["Canal A", icon(svg`${ln("M1 2l10 9")}${lt("A")}`)],
  ["Linha A", icon(svg`${ln("M1 14L12 2")}${lt("A")}`)],
  ["Ciclo", icon(svg`${ln("M1 5h9M2 3v4M9 3v4M5 12h10M6 10v4M14 10v4")}`)],
  ["Tridente", icon(ln("M3 3v10M3 13L10 2"))],
  null,
  ["Subir", icon(svg`<path d="M8 1l7 7h-4v6H5V8H1z" fill="#22c422" stroke="#127a12"/>`)],
  ["Descer", icon(svg`<path d="M8 15l7-7h-4V2H5v6H1z" fill="#e02020" stroke="#8c1010"/>`)],
  null,
  ["Barras 1", icon(ln("M2 2v12M6 2v12M10 2v12M14 2v12", "#6f8fc4", 1.6))],
  ["Barras 2", icon(ln("M2 2v12M7 2v12M9 2v12M14 2v12", "#6f8fc4", 2.2))],
  ["Vertical", icon(ln("M9 2v12"))],
  ["Barras 3", icon(ln("M2 2v12M6 2v12M10 2v12M14 2v12", "#6f8fc4", 1.4))],
  ["Barras G", icon(svg`${ln("M2 2v12M5 2v12M9 2v8", "#6f8fc4", 2)}${lt("G")}`)],
];

const chrome = svg`<circle cx="16" cy="16" r="14" fill="#f2c51d"/><path d="M16 16L3.900 9A14 14 0 0 1 28.100 9z" fill="#dd3b30"/><path d="M16 16L3.900 9A14 14 0 0 0 16 30l5-9z" fill="#2ea04b"/><path d="M16 9h12.100A14 14 0 0 0 3.900 9l6 9z" fill="#dd3b30"/><circle cx="16" cy="16" r="6.800" fill="#fff"/><circle cx="16" cy="16" r="5.300" fill="#2f77d2"/>`;
const APPS: [string, unknown][] = [
  ["Explorador", svg`<path d="M2 4l3-3h8l2 3h15v24H2z" fill="#e8c95f"/><path d="M5 2h7v4H5z" fill="#fff"/><path d="M5 2h3v2H5z" fill="#2a9c3a"/><path d="M13 3h15v4H13z" fill="#fff"/><path d="M13 3h4v2h-4z" fill="#d33"/><path d="M2 7h29v22H2z" fill="#f7e6a0"/><path d="M5 19h23v12h-6v-6H11v6H5z" fill="#8fd0f0" stroke="#5fb2df"/>`],
  ["Winamp", svg`<path d="M16 1l15 15-15 15L1 16z" fill="#fff" stroke="#111" stroke-width="2"/><path d="M25 2L5 17l9 1-8 12 22-16-9-1z" fill="#f39a1e" stroke="#7a3b00"/>`],
  ["Candle", svg`<path d="M0 0h32v32H0z" fill="#2f8252" stroke="#155c34" stroke-width="2"/><path d="M2 10h8v13H2z" fill="#0b0b0b"/><path d="M13 14h6v4h-6zM16 18v12" fill="#cfe8d8" stroke="#111" stroke-width="2"/><path d="M23 3h5v17h-5z" fill="#fff" stroke="#111"/>`],
  ["Câmera", svg`<rect x="5" y="1" width="8" height="12" rx="2" fill="#2a2a2a"/><circle cx="9" cy="6" r="2.500" fill="#888"/><path d="M6 13l-5 8 2 3h11l1-5-4-6z" fill="#333"/><path d="M13 2c10 0 10 4 10 11" fill="none" stroke="#555"/><rect x="21" y="11" width="4" height="12" rx="2" fill="#cfd6de" stroke="#333"/><path d="M23 23c0 3-1 4-4 6" fill="none" stroke="#333" stroke-width="2"/><path d="M20 26l-3 5" stroke="#333" stroke-width="4"/>`],
  ["Paint", svg`<path d="M2 20C3 9 14 4 24 8c6 3 2 7 0 10-3 5 1 8-5 11S0 29 2 20z" fill="#bcdcf0" stroke="#6d9fc0"/><circle cx="8" cy="18" r="2.500" fill="#d33"/><circle cx="13" cy="12" r="2.500" fill="#2a9c3a"/><circle cx="20" cy="11" r="2.500" fill="#e2b11d"/><circle cx="9" cy="25" r="2.500" fill="#1f9ad6"/><path d="M28 5L17 30" stroke="#d98a35" stroke-width="3"/><path d="M25 2l6-1-1 7-4 3z" fill="#b08050"/>`],
  ["Avast", svg`<path d="M6 17h12M14 15L25 5M16 17l9 10" stroke="#f47b20" stroke-width="8" stroke-linecap="round"/><circle cx="15" cy="15" r="10" fill="#f47b20"/><circle cx="26" cy="4" r="3.500" fill="#f47b20"/><circle cx="25" cy="26" r="5.500" fill="#f47b20"/><circle cx="14" cy="14" r="6.500" fill="#f7f7f7"/><text x="10" y="18" font-size="13" font-weight="700" font-family="Liberation Sans" fill="#1c2748">a</text>`],
  ["Firefox", svg`<circle cx="16" cy="16" r="14" fill="#e8701b"/><circle cx="17" cy="14" r="10.500" fill="#1f5fae"/><path d="M17 4c7 0 12 6 11 13-3-5-7-6-11-7z" fill="#49a6dd"/><path d="M3 8c1 4 5 4 9 4l3 4-5 3c3 5 10 5 14 0 1 6-4 10-9 10C7 29 1 21 3 8z" fill="#f6971f"/><path d="M28 12c3 8-1 16-9 18 5-4 8-9 9-18z" fill="#ffd23a"/>`],
  ["Chrome", chrome],
  ["Gravador", svg`<circle cx="16" cy="18" r="13.500" fill="#ee5a36"/><circle cx="13" cy="5" r="4" fill="#ee5a36"/><circle cx="13" cy="5" r="1.500" fill="#fff"/><circle cx="16" cy="18" r="10.500" fill="#f9ded5"/><path d="M7 25L25 11M16 18v8" stroke="#ee5a36" stroke-width="3"/><g fill="#ee5a36"><circle cx="12" cy="13" r="3"/><circle cx="20" cy="11" r="2.500"/><circle cx="22" cy="20" r="3"/><circle cx="16" cy="25" r="2.500"/><circle cx="10" cy="21" r="2.500"/></g>`],
  ["PowerPoint", svg`<path d="M2 4l4-3h22v24H2z" fill="#f6b79c" stroke="#df6a3f"/><path d="M5 8l26 2-2 20-26-2z" fill="#fff" stroke="#ccc"/><path d="M7 11l20 2-1 13-20-2z" fill="#e25622"/><path d="M9 15h8M9 18h8M9 21h8" stroke="#fff" stroke-width="1.500"/><circle cx="21.500" cy="18.500" r="4" fill="#fff"/><path d="M21.500 18.500v-4a4 4 0 0 1 4 4z" fill="#e25622"/>`],
];

/* ---------- plot ---------- */
@customElement("chart-plot")
export class ChartPlot extends LitElement {
  @property({ attribute: false }) data!: Plot;
  @property({ attribute: false }) notes: Note[] = [];
  @property({ reflect: true }) variant = "m15";
  static styles = css`
    :host { display: flex; min-height: 0; overflow: hidden; position: relative; background: #141414; }
    .area { position: relative; flex: 1; min-width: 0; background: linear-gradient(#2d2d2d, #1c1c1c 40%, #000 90%); }
    :host([short]) .area { background: linear-gradient(#161616, #000 80%); }
    .area svg { position: absolute; inset: 0; width: 100%; height: 100%; display: block; }
    .area path, .area polyline, .area rect { vector-effect: non-scaling-stroke; }
    .scale { position: relative; width: 64px; flex: none; font: 11px/14px "Noto Sans", "Open Sans", sans-serif; color: #eee; }
    :host([variant="day"]) .scale { width: 62px; }
    .lab, .tag { position: absolute; right: 3px; transform: translateY(-50%); white-space: nowrap; }
    .tag { right: 0; padding: 0 3px; border-radius: 1px; color: #000; font-weight: 700; line-height: 14px; }
    :host([variant="day"]:not([short])) .lab { right: 18px; }
    :host([variant="day"]:not([short])) .tag { right: 15px; }
    :host([variant="m15"][short]) .lab { right: 15px; }
    :host([variant="m15"][short]) .tag { right: 12px; }
    .note { position: absolute; margin: 0; font: italic 700 14px/18px Lato, "Open Sans", sans-serif; white-space: pre; }
  `;
  render() {
    const d = this.data;
    const [x0, y0, w, h] = d.box;
    const top = (y: number) => `top:${(((y - y0) / h) * 100).toFixed(2)}%`;
    const half = (d.body ?? 0) / 2;
    return html`
      <div class="area">
        <svg viewBox="${x0} ${y0} ${w} ${h}" preserveAspectRatio="none" role="img" aria-label="Gráfico">
          ${d.level ? svg`<path d="M${x0} ${d.level[0]}H${d.level[1]}" stroke="#999" fill="none"/>` : nothing}
          ${(d.candles ?? []).map(([hi, a, b, lo, up], i) => {
            const x = d.first! + i * d.step!;
            return svg`<path d="M${x} ${hi}V${lo}" stroke=${up ? "#e6e6e6" : "#9a9a9a"} fill="none"/><rect x=${x - half} y=${a} width=${half * 2} height=${Math.max(b - a, 3)} fill=${up ? "#fff" : "#0c0c0c"} stroke=${up ? "none" : "#a8a8a8"} />`;
          })}
          ${d.lines.map((l) => svg`<polyline points=${l.kind ? stair(l.d) : poly(l.d)} fill="none" stroke=${l.color} stroke-width=${l.w} stroke-linejoin="round"/>`)}
        </svg>
      </div>
      <div class="scale">
        ${d.labels.map(([y, t]) => html`<span class="lab" style=${top(y)}>${t}</span>`)}
        ${d.tags.map((t) => html`<span class="tag" style="${top(t.y)};background:${t.bg}">${t.text}</span>`)}
      </div>
      ${this.notes.map((n) => html`<p class="note" style="left:${n.x}%;top:${n.y}%;color:${n.color}">${n.text}</p>`)}
    `;
  }
}

/* ---------- chart window ---------- */
@customElement("chart-window")
export class ChartWindow extends LitElement {
  @property({ attribute: false }) chart!: Chart;
  static styles = css`
    :host { display: flex; min-width: 0; min-height: 0; }
    * { box-sizing: border-box; }
    button { font: inherit; padding: 0; margin: 0; border: 0; background: none; color: inherit; }
    .win { flex: 1; min-width: 0; display: flex; flex-direction: column; padding: 0 8px 5px 8px; border-top: 1px solid #6b7580; border-right: 1px solid #10c4e0; border-bottom: 1px solid #10c4e0; background: #b9d1ea; }
    .win.off { background: #d6e3f0; border-right: 1px solid #888; border-bottom: 1px solid #888; border-left: 1px solid #eef4fa; padding: 0 8px 5px 7px; }
    .bar { height: 31px; flex: none; display: flex; align-items: center; gap: 3px; margin: 0 -8px; padding: 4px 8px 0 9px; background: linear-gradient(#9ab6d3, #adc6e0 60%, #b9d1ea); font: 12px/16px "Open Sans", "Noto Sans", sans-serif; color: #1b2734; }
    .off .bar { background: linear-gradient(#bccddd, #c9d8e6 60%, #d6e3f0); color: #5a6570; margin: 0 -8px 0 -7px; padding: 4px 9px 0 8px; }
    .lt { width: 16px; height: 16px; display: grid; place-items: center; background: linear-gradient(#c2d483, #8fa84a); color: #fff; font: 9px/9px "Open Sans", sans-serif; }
    .title { flex: 1; min-width: 0; white-space: nowrap; overflow: hidden; }
    .s { width: 55px; height: 18px; border-radius: 4px; border: 1px solid #e8eef6; color: #fff; font: 700 14px/14px "Open Sans", sans-serif; position: relative; padding-right: 8px; }
    .s::after { content: ""; position: absolute; right: 5px; top: 7px; border: 3px solid transparent; border-top: 4px solid #fff; }
    .s.g { background: linear-gradient(#8d8d8d, #6d6d6d); }
    .s.b { background: linear-gradient(#6fa5ff, #2f7bff); margin-right: 3px; }
    .off .s.g { background: linear-gradient(160deg, #b8b8dc, #a2a2a2 50%); }
    .off .s.b { background: linear-gradient(160deg, #b4c4ff, #5ba4ff 55%); }
    .cap { width: 32px; height: 19px; border: 1px solid #7089a5; border-radius: 2px; display: grid; place-items: center; background: linear-gradient(#c8daeb 45%, #a5bfd9 50%, #b6cfe6); margin-right: -1px; }
    .cap.x { background: linear-gradient(#dc9a8c 45%, #b83b26 50%, #cf6f58); border-color: #6d2a20; }
    .off .cap { background: #cbd9e6; border-color: #97a9ba; }
    .pane { display: flex; flex-direction: column; border: 1px solid #777; min-height: 0; }
    .pane.price { flex: 1; margin-bottom: 3px; border-bottom: 1px solid #fff; }
    .pane.macd { flex: none; background: #f0f0f0; border-bottom: 0; }
    .head { height: 20px; flex: none; display: flex; align-items: center; gap: 4px; padding: 0 2px; background: #bfcddb; border-bottom: 1px solid #888; font: 700 12px/18px "Open Sans", "Noto Sans", sans-serif; color: #111; }
    .head p { flex: 1; min-width: 0; margin: 0; overflow: hidden; white-space: pre; }
    .navy, .wine { font-size: 13px; }
    .navy { color: #000080; }
    .wine { color: #800000; }
    .doc { width: 13px; height: 13px; background: #fff; border: 1px solid #333; border-top: 3px solid #8a8a8a; }
    .mini { width: 15px; height: 14px; display: grid; place-items: center; background: #f0f0f0; border: 1px solid #777; border-top-color: #fff; border-left-color: #fff; }
    .mini + .mini { margin-left: -1px; }
    chart-plot.big { flex: 1; }
    chart-plot.small { height: 110px; flex: none; }
    .axis { margin-right: 64px; background: #141414; color: #eee; font: 11px/18px "Noto Sans", sans-serif; }
    .off .axis { margin-right: 62px; }
    .times { display: grid; grid-auto-flow: column; grid-auto-columns: 1fr; padding: 1px 31px 0 5px; text-align: center; height: 19px; }
    .off .times { padding: 1px 18px 0 4px; }
    .months { display: flex; height: 17px; text-align: center; }
    .months span { background: #808080; border: 1px solid #111; border-left-color: #bbb; border-top-color: #aaa; min-width: 0; line-height: 14px; flex-basis: 0; }
    .foot { height: 16px; flex: none; margin-top: 2px; display: flex; align-items: stretch; background: #ececec; font: 12px/15px "Liberation Sans", sans-serif; color: #222; overflow: hidden; }
    .nav { width: 15px; flex: none; border-right: 1px solid #888; border-bottom: 1px solid #888; display: grid; place-items: center; background: #f4f4f4; }
    .tab { position: relative; flex: none; padding: 0 6px 0 2px; border-bottom: 1px solid #777; color: #444; background: #f2f2f2; }
    .tab::after { content: ""; position: absolute; right: 0; top: 0; height: 15px; border-right: 1px solid #555; transform: skewX(-24deg); }
    .tab.on { background: #fff; border-bottom: 0; color: #000; }
    .fill { flex: 1; display: flex; align-items: center; }
    .stop { width: 3px; height: 15px; border-right: 2px solid #888; margin: 0 8px 0 0; }
    .off .stop { margin-left: 25px; }
    .grip { width: 16px; height: 14px; margin: 1px 8px 0 auto; display: grid; place-items: center; border: 1px solid #999; border-radius: 2px; background: linear-gradient(#f5f5f5, #d0d0d0); }
    .off .grip { width: 23px; }
    .end { width: 12px; }
  `;
  private tri(dir: string, bar = false) {
    const d: Record<string, string> = { l: "M6 1v8L2 5z", r: "M3 1v8l4-4z" };
    return html`<svg width="10" height="10" viewBox="0 0 10 10" aria-hidden="true"><path d=${d[dir]} fill="#111"/>${bar ? svg`<path d=${dir === "l" ? "M1 1v8" : "M8.500 1v8"} stroke="#111" stroke-width="1.500"/>` : nothing}</svg>`;
  }
  private header(parts: [string, string][]) {
    return html`<div class="head"><span class="doc"></span><p>${parts.map(([c, t]) => html`<span class=${c}>${t}</span>`)}</p>
      <button class="mini" aria-label="Maximizar"><svg width="11" height="10" viewBox="0 0 11 10"><path d="M1 1.500h9v7.500H1z" fill="none" stroke="#111" stroke-width="1.400"/></svg></button>
      <button class="mini" aria-label="Fechar"><svg width="11" height="10" viewBox="0 0 11 10"><path d="M1 1l9 8.500M10 1L1 9.500" stroke="#444"/></svg></button></div>`;
  }
  render() {
    const c = this.chart;
    return html`
      <section class=${classMap({ win: true, off: !c.active })}>
        <div class="bar">
          <span class="lt">LT</span><span class="title">${c.title}</span>
          <button class="s g">S</button><button class="s b">S</button>
          <button class="cap" aria-label="Minimizar"><svg width="12" height="10" viewBox="0 0 12 10"><path d="M1 5.500h10v3H1z" fill="#fff" stroke="#555"/></svg></button>
          <button class="cap" aria-label="Restaurar"><svg width="12" height="11" viewBox="0 0 12 11"><path d="M2 2h8v7H2z" fill="none" stroke="#444" stroke-width="3.200"/><path d="M2 2h8v7H2z" fill="none" stroke="#fff" stroke-width="1.600"/></svg></button>
          <button class="cap x" aria-label="Fechar"><svg width="12" height="11" viewBox="0 0 12 11"><path d="M2 1.500l8 8M10 1.500l-8 8" stroke="#445" stroke-width="3.800"/><path d="M2 1.500l8 8M10 1.500l-8 8" stroke="#fff" stroke-width="2.200"/></svg></button>
        </div>
        <div class="pane price">${this.header(c.head)}<chart-plot class="big" variant=${c.id} .data=${c.price} .notes=${c.notes}></chart-plot></div>
        <div class="pane macd">${this.header(c.macdHead)}<chart-plot class="small" short variant=${c.id} .data=${c.macd} .notes=${c.macdNotes}></chart-plot>
          <div class="axis">
            <div class="times">${c.times.map((t) => html`<span>${t}</span>`)}</div>
            <div class="months">${c.months.map(([w, t]) => html`<span style="flex-grow:${w}">${t}</span>`)}</div>
          </div>
        </div>
        <div class="foot">
          <button class="nav" aria-label="Primeira">${this.tri("l", true)}</button><button class="nav" aria-label="Anterior">${this.tri("l")}</button><button class="nav" aria-label="Próxima">${this.tri("r")}</button><button class="nav" aria-label="Última">${this.tri("r", true)}</button>
          ${c.tabs.map((t, i) => html`<button class=${classMap({ tab: true, on: i === 0 })}>${t}</button>`)}
          <div class="fill"><span class="stop"></span>${this.tri("l")}<span class="grip"><svg width="8" height="8" viewBox="0 0 8 8"><path d="M1 0v8M4 0v8M7 0v8" stroke="#555"/></svg></span><span class="end">${this.tri("r")}</span></div>
        </div>
      </section>`;
  }
}

/* ---------- page ---------- */
@customElement("app-root")
export class AppRoot extends LitElement {
  static styles = css`
    :host { display: flex; flex-direction: column; height: 100vh; min-height: 640px; overflow: hidden; background: #b9d1ea; color: #111; font: 12px/16px "Open Sans", "Noto Sans", sans-serif; }
    * { box-sizing: border-box; }
    button { font: inherit; padding: 0; margin: 0; border: 0; background: none; color: inherit; }
    .browser { height: 13px; flex: none; display: flex; overflow: hidden; background: linear-gradient(#d3dde7, #aab3bd 70%, #777); border-bottom: 1px solid #333; padding-left: 4px; }
    .btab { flex: none; width: 161px; height: 22px; margin-right: -1px; padding: 2px 10px 0 8px; display: flex; gap: 4px; align-items: flex-start; border: 1px solid #8c98a5; border-radius: 6px 6px 0 0; background: #c3cdd8; color: #555; line-height: 16px; white-space: nowrap; }
    .btab.on { background: #f5f7f9; color: #333; }
    .btab span { flex: 1; min-width: 0; overflow: hidden; }
    .btab i { width: 13px; height: 13px; margin-top: 3px; border-radius: 2px; font: 700 11px/13px "Open Sans", sans-serif; color: #fff; text-align: center; }
    .caps { margin-left: auto; display: flex; }
    .caps span { width: 28px; height: 13px; border-left: 1px solid #8b95a0; display: grid; place-items: center; }
    .frame { flex: 1; min-height: 0; display: flex; flex-direction: column; padding-left: 7px; border-left: 1px solid #667; background: linear-gradient(#a9c4e0, #b9d1ea 80px, #d8e6f4 300px, #b9d1ea 420px); }
    .titlebar { height: 29px; flex: none; margin-left: -7px; padding-left: 7px; display: flex; align-items: center; gap: 4px; background: linear-gradient(115deg, #c3d7ec 0 24%, #adc6e1 27%, #b7cfe8 35%, #a9c3df 38% 58%, #bad1ea 60% 70%, #a6c0dd 75%, #b9d0e9 78%, #a9c3df 86%, #bad1ea 90%); color: #1b2734; }
    .lt { width: 16px; height: 16px; display: grid; place-items: center; background: linear-gradient(#c2d483, #8fa84a); color: #fff; font: 9px/9px "Open Sans", sans-serif; }
    .titlebar h1 { flex: 1; margin: 0; font: 12px/16px "Open Sans", "Noto Sans", sans-serif; }
    .wb { display: flex; align-self: flex-start; margin-right: -8px; }
    .wb button { width: 28px; height: 20px; display: grid; place-items: center; border: 1px solid #6d829a; border-top: 0; background: linear-gradient(#d6e3f0 45%, #9fb4ca 50%, #bdd0e3); }
    .wb button:first-child { border-radius: 0 0 0 4px; }
    .wb .x { width: 50px; background: linear-gradient(#e09a88 45%, #c33e25 50%, #d9694c); }
    .client { flex: 1; min-height: 0; display: flex; flex-direction: column; background: #f0f0f0; border-top: 1px solid #7d8894; }
    .menu { height: 25px; flex: none; display: flex; align-items: center; padding: 2px 0 0 5px; gap: 8px; border-bottom: 1px solid #d8d8d8; }
    .tools { height: 22px; flex: none; display: flex; align-items: center; border-bottom: 2px solid #888; }
    .set { display: flex; align-items: center; height: 20px; border-right: 1px solid #b5b5b5; padding: 0 2px 0 1px; }
    .set.grip { border-left: 1px solid #bbb; margin-left: 4px; }
    .set.last { border-right-color: transparent; }
    .tb { width: 19px; height: 19px; display: grid; place-items: center; }
    .tb svg { width: 15px; height: 15px; }
    .tb.on { background: #f8f8f8; border: 1px solid #ddd; border-top-color: #888; border-left-color: #888; }
    select { width: 110px; height: 18px; margin: 0 1px; padding: 1px 4px 0; border: 1px solid #ccc; border-top-color: #888; border-radius: 0; appearance: none; font: 12px/16px "Liberation Sans", sans-serif; color: #111; background: linear-gradient(45deg, transparent 50%, #111 50%) right 10px center / 5px 5px no-repeat, linear-gradient(-45deg, transparent 50%, #111 50%) right 5px center / 5px 5px no-repeat, #fff; }
    .work { flex: 1; min-height: 0; display: grid; grid-template-columns: 215px 1fr 20px; gap: 0 3px; padding-left: 1px; }
    .quotes { display: flex; flex-direction: column; min-height: 0; overflow: hidden; border-right: 1px solid #999; }
    .qhead { height: 19px; flex: none; display: flex; justify-content: space-between; align-items: center; padding: 0 6px 0 2px; }
    .qbox { flex: 1; min-height: 0; overflow: hidden; background: #ffffa0; border: 1px solid #888; border-right: 0; }
    table { width: 100%; border-collapse: collapse; table-layout: fixed; }
    th, td { padding: 0; overflow: hidden; white-space: nowrap; }
    thead tr { height: 15px; }
    thead th { font: 12px/14px "Open Sans", "Noto Sans", sans-serif; text-align: left; background: #fafafa; padding-left: 2px; border-right: 1px solid #aaa; border-bottom: 1px solid #aaa; }
    tbody { font: 700 11px/15px "DejaVu Sans Condensed", "DejaVu Sans", sans-serif; }
    tbody tr { height: 17px; }
    tbody tr:nth-child(3n+1) { height: 16px; }
    tbody td { text-align: center; background: #ffff80; border-right: 1px solid #f0f070; border-bottom: 1px solid #f0f070; color: #004000; }
    tbody td:last-child { color: #000; border-right: 0; }
    .neg td:not(:last-child) { color: #f22; }
    .mark td:first-child { background: #003000; color: #fff; }
    .neg.mark td:first-child { background: #800000; color: #fff; }
    .over td:nth-child(2) span { border-top: 1px solid #665; }
    .rule td { border-top: 1px solid #999955; }
    .group th { background: #f0f0f0; border-top: 1px solid #777; border-bottom: 1px solid #888; font-weight: 700; font-size: 10px; line-height: 14px; }
    .gr { display: flex; justify-content: space-between; padding-right: 3px; }
    .gr > span:first-child::before { content: ""; display: inline-block; margin: 0 5px 0 6px; border: 5px solid transparent; border-top: 6px solid #111; border-bottom: 0; }
    .gr b { font-size: 11px; }
    .gr .up { color: #007a10; }
    .gr .down { color: #800000; }
    .gr .flat { color: #999; }
    .hscroll { height: 18px; flex: none; display: flex; align-items: center; padding: 0 5px 0 4px; gap: 6px; }
    .thumb { width: 16px; height: 15px; display: grid; place-items: center; border: 1px solid #999; border-radius: 2px; background: linear-gradient(#f5f5f5, #d0d0d0); }
    .hscroll .last { margin-left: auto; }
    .qtabs { height: 18px; flex: none; display: flex; overflow: hidden; margin-bottom: 4px; font: 12px/16px "Liberation Sans", sans-serif; color: #444; }
    .nav { width: 18px; flex: none; display: grid; place-items: center; border-right: 1px solid #888; border-bottom: 1px solid #888; }
    .nav:first-child { width: 14px; }
    .qtab { position: relative; flex: none; height: 16px; padding: 0 6px 0 7px; border-bottom: 1px solid #888; }
    .qtab::after { content: ""; position: absolute; right: 0; top: 0; height: 15px; border-right: 1px solid #555; transform: skewX(-20deg); }
    .qtab.on { background: #fff; color: #000; border-bottom: 0; font-weight: 700; }
    .mdi { display: grid; grid-template-columns: 1fr 1fr; min-width: 0; min-height: 0; padding-bottom: 2px; background: #888; }
    .draw { display: flex; flex-direction: column; overflow: hidden; border-left: 1px solid #aaa; padding: 5px 0 0 4px; }
    .dr { width: 18px; height: 18px; flex: none; display: grid; place-items: center; }
    .dr svg { width: 16px; height: 16px; }
    .dr.on { border: 1px solid #999; background: #fff; }
    .sep { flex: none; height: 1px; margin: 3px 0 3px -4px; background: #aaa; }
    .status { height: 6px; flex: none; display: flex; border-top: 1px solid #999; border-bottom: 1px solid #556; background: #f4eef0; }
    .taskbar { height: 39px; flex: none; display: flex; align-items: center; background: linear-gradient(90deg, #8496ac 0, #94a7bd 50px, #a9c2dd 100px, #b9d1ea 180px, #b9d1ea 58%, #a9c3df 60%, #b9d0e9 64%, #a5bfdc 70%, #b3cbe5 85%, #8497af 87%, #75869b 100%); }
    .app { width: 58px; height: 39px; flex: none; display: grid; place-items: center; }
    .start { width: 55px; height: 39px; display: grid; place-items: center; margin-right: 4px; }
    .open { width: 56px; height: 38px; margin-left: 2px; border: 1px solid #68809c; border-radius: 2px; background: linear-gradient(#d2e1f0, #b5cae0); display: grid; place-items: center; }
    .open.cur { background: linear-gradient(#f0f4f8, #d2dfec); margin-left: 4px; }
    .open.many { width: 50px; }
    .biglt { width: 33px; height: 33px; display: grid; place-items: center; border-radius: 2px; background: linear-gradient(#c5d488, #8ea64c); color: #fff; font: 16px/16px "Open Sans", sans-serif; }
    .xp { width: 32px; height: 31px; border-radius: 4px; display: flex; align-items: flex-end; justify-content: flex-end; background: linear-gradient(135deg, #e0a030 26%, #0a0c34 27%); color: #fff; font: 700 20px/24px "Open Sans", sans-serif; padding-right: 1px; }
    .stack { width: 4px; height: 38px; border: 1px solid #8ea5bd; border-left: 0; }
    .tray { margin-left: auto; display: flex; align-items: center; gap: 16px; color: #fff; height: 39px; }
    .tray svg + svg { margin-left: 2px; }
    .tray svg + svg + svg { margin-left: -8px; }
    .clock { text-align: center; font: 12px/18px "Open Sans", sans-serif; }
    .peek { width: 11px; height: 39px; margin-right: 1px; border: 1px solid #5d6f86; background: linear-gradient(90deg, #b8c8da, #7f93ab); }
  `;
  private arrow(dir: "l" | "r", bar = false) {
    return html`<svg width="10" height="10" viewBox="0 0 10 10" aria-hidden="true"><path d=${dir === "l" ? "M6 1v8L2 5z" : "M3 1v8l4-4z"} fill="#111"/>${bar ? svg`<path d=${dir === "l" ? "M1 1v8" : "M8.500 1v8"} stroke="#111" stroke-width="1.500"/>` : nothing}</svg>`;
  }
  private tools(names: string[], grip: boolean, last = false) {
    return html`<div class=${classMap({ set: true, grip, last })}>${names.map((n) => html`<button class=${classMap({ tb: true, on: n === "15" || n === "Grade" })} aria-label=${n}>${TB[n]}</button>`)}</div>`;
  }
  private quotes() {
    return html`<aside class="quotes">
      <div class="qhead"><span>Cotações</span><button aria-label="Fechar"><svg width="7" height="7" viewBox="0 0 7 7"><path d="M.5.5l6 6M6.500.5l-6 6" stroke="#111" stroke-width="1.500"/></svg></button></div>
      <div class="qbox"><table>
        <colgroup><col width="53"><col width="55"><col width="50"><col></colgroup>
        <thead><tr><th>Ativo</th><th>Último</th><th>Variação</th><th>Fecha...</th></tr></thead>
        <tbody>${GROUPS.map((g) => html`
          <tr class="group"><th colspan="4" scope="colgroup"><div class="gr"><span>${g.name}</span><b class=${g.tone}>${g.pct}</b></div></th></tr>
          ${g.rows.map((r) => html`<tr class=${classMap({ neg: !!r.down, mark: !!r.mark, over: !!r.over, rule: !!r.rule })}><td>${r.s}</td><td><span>${r.u}</span></td><td>${r.v}</td><td>${r.f}</td></tr>`)}`)}
        </tbody>
      </table></div>
      <div class="hscroll">${this.arrow("l")}<span class="thumb"><svg width="8" height="8" viewBox="0 0 8 8"><path d="M1 0v8M4 0v8M7 0v8" stroke="#555"/></svg></span><span class="last">${this.arrow("r")}</span></div>
      <div class="qtabs"><button class="nav" aria-label="Primeira">${this.arrow("l", true)}</button><button class="nav" aria-label="Anterior">${this.arrow("l")}</button><button class="nav" aria-label="Próxima">${this.arrow("r")}</button><button class="nav" aria-label="Última">${this.arrow("r", true)}</button>
        <button class="qtab">Todos</button><button class="qtab">Setores</button><button class="qtab on">Favoritos</button></div>
    </aside>`;
  }
  render() {
    return html`
      <div class="browser">
        <div class="btab"><i style="background:#17456b">W</i><span>Futuros de Índices | E</span>×</div>
        <div class="btab"><i style="background:#d8453a">M</i><span>Entrada (1) - atoscar</span>×</div>
        <div class="btab on"><i style="background:#3b5998">f</i><span>DrCarreira Trader</span>×</div>
        <div class="btab"><i style="background:#f58220">B</i><span>BLOG DO DR.CARREIRA</span>×</div>
        <div class="btab"><i style="background:#3b5998">f</i><span>DR CARREIRA MERCADO</span>×</div>
        <div class="caps"><span></span><span>${icon(svg`<path d="M3 5h9v9H3zM6 2h9v9" fill="none" stroke="#555" stroke-width="1.500"/>`, 14)}</span><span>${icon(svg`<path d="M3 3l10 10M13 3L3 13" stroke="#666" stroke-width="3"/>`, 12)}</span><span></span></div>
      </div>
      <main class="frame">
        <header class="titlebar">
          <span class="lt">LT</span><h1>ProfitChart Lite - Registrado</h1>
          <div class="wb"><button aria-label="Minimizar">${icon(svg`<path d="M1 10h14v3H1z" fill="#fff" stroke="#445"/>`, 14)}</button><button aria-label="Maximizar">${icon(svg`<path d="M2.500 3h11v10h-11z" fill="none" stroke="#445" stroke-width="4"/><path d="M2.500 3h11v10h-11z" fill="none" stroke="#fff" stroke-width="2"/>`, 14)}</button><button class="x" aria-label="Fechar">${icon(svg`<path d="M3 3l10 10M13 3L3 13" stroke="#533" stroke-width="5"/><path d="M3 3l10 10M13 3L3 13" stroke="#fff" stroke-width="3"/>`, 14)}</button></div>
        </header>
        <div class="client">
          <nav class="menu">${["Arquivo", "Editar", "Exibir", "Inserir", "Ferramentas", "Desktop", "Janela", "Ajuda"].map((m) => html`<button>${m}</button>`)}</nav>
          <div class="tools">
            ${TOOL_GROUPS.map((g, i) => this.tools(g, i !== 2))}
            <div class="set grip"><select aria-label="Ativo"><option>WINFUT</option></select></div>
            ${this.tools(TOOL_LAST, true, true)}
          </div>
          <div class="work">
            ${this.quotes()}
            <div class="mdi">${CHARTS.map((c) => html`<chart-window .chart=${c}></chart-window>`)}</div>
            <div class="draw">${DRAW.map((d, i) => (d ? html`<button class=${classMap({ dr: true, on: i === 0 || i === 3 })} aria-label=${d[0]}>${d[1]}</button>` : html`<span class="sep"></span>`))}</div>
          </div>
          <div class="status"></div>
        </div>
      </main>
      <footer class="taskbar">
        <button class="start" aria-label="Iniciar"><svg width="36" height="36" viewBox="0 0 36 36"><defs><radialGradient id="orb" cy="0.9"><stop offset="0" stop-color="#4fc4ee"/><stop offset="0.600" stop-color="#1d5c94"/><stop offset="1" stop-color="#1b3654"/></radialGradient></defs><circle cx="18" cy="18" r="17" fill="url(#orb)" stroke="#8fb1cc"/><path d="M5 11a15 15 0 0 1 26 0c-8-4-18-4-26 0z" fill="#fff" opacity=".35"/><path d="M10 10c3-2 5-1 7 0l-2 7c-2-1-4-1-7 0z" fill="#f0562a"/><path d="M19 10c3 2 5 1 8 0l-2 8c-3 1-5 1-8-1z" fill="#7cc142"/><path d="M8 19c3-1 5-1 7 0l-2 7c-2-1-4-2-7 0z" fill="#3f9ae0"/><path d="M17 19c3 2 5 2 8 1l-2 7c-3 1-5 1-8-1z" fill="#fcc52c"/></svg></button>
        ${APPS.map(([n, b]) => html`<button class="app" aria-label=${n}>${icon(b, 32, 32)}</button>`)}
        <button class="open cur"><span class="biglt">LT</span></button>
        <button class="open" aria-label="Chrome">${icon(chrome, 32, 32)}</button>
        <button class="open many"><span class="xp">xp</span></button><span class="stack"></span><span class="stack"></span>
        <div class="tray">
          <span>PT</span>
          <svg width="10" height="6" viewBox="0 0 10 6"><path d="M5 0l4.500 6h-9z" fill="#fff"/></svg>
          <svg width="18" height="16" viewBox="0 0 18 16"><path d="M1 5h4l4-4v14l-4-4H1z" fill="#fff" stroke="#445"/><path d="M11 5q2 3 0 6M14 3q4 5 0 10" stroke="#fff" stroke-width="1.500" fill="none"/></svg>
          <svg width="18" height="18" viewBox="0 0 18 18"><path d="M5 1l4 3-4 3-4-3zM13 1l4 3-4 3-4-3zM5 7l4 3-4 3-4-3zM13 7l4 3-4 3-4-3z" fill="#8fd0f5" stroke="#2f8fd0"/><path d="M5 14l4-3 4 3-4 3z" fill="#3f9fe0"/><circle cx="13.500" cy="13.500" r="4" fill="#1fa02c"/><path d="M11.500 13.500l1.500 2 3-4" stroke="#fff" fill="none"/></svg>
          <time class="clock">16:24<br>27/03/2014</time>
          <button class="peek" aria-label="Mostrar área de trabalho"></button>
        </div>
      </footer>`;
  }
}
